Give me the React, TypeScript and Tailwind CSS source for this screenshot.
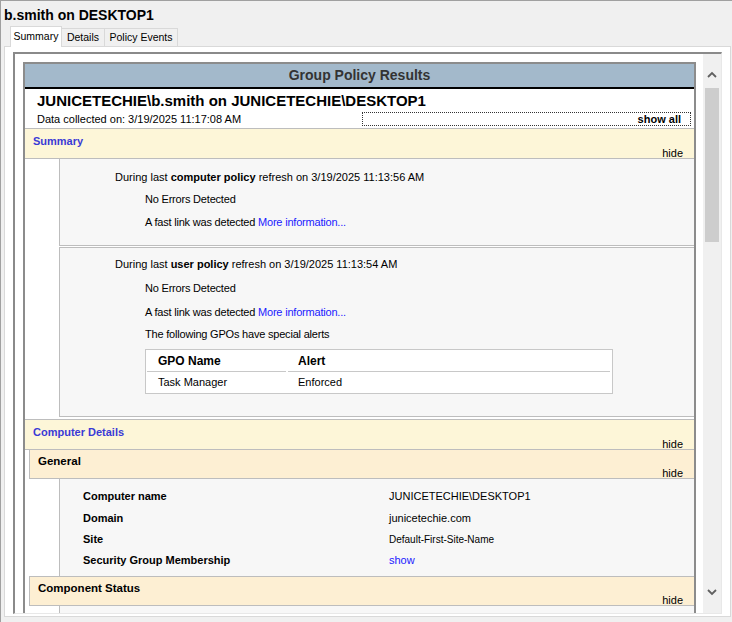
import React from "react";

const font = "font-['Liberation_Sans',Arial,sans-serif]";

function Chevron({ up }: { up?: boolean }) {
  return (
    <svg width="10" height="8" viewBox="0 0 10 8" className="block">
      <polyline
        points={up ? "1,6 5,2 9,6" : "1,2 5,6 9,2"}
        fill="none"
        stroke="#606060"
        strokeWidth="1.8"
      />
    </svg>
  );
}

function SectionBand({ title, className = "" }: { title: string; className?: string }) {
  return (
    <div className={`h-[31px] border-y border-[#bdbdbd] bg-[#fdf6d8] pt-[5px] ${className}`}>
      <div className="pl-[8px] text-[11px] leading-[14px] font-bold text-[#3a3ad6]">{title}</div>
      <div className="pr-[11px] text-right text-[11px] leading-[10px]">hide</div>
    </div>
  );
}

function SubBand({ title, className = "" }: { title: string; className?: string }) {
  return (
    <div className={`ml-[4px] border-l border-[#bdbdbd] bg-[#fdefd3] pt-[4px] ${className}`}>
      <div className="pl-[8px] text-[11.5px] leading-[14px] font-bold">{title}</div>
      <div className="pr-[11px] text-right text-[11px] leading-[11px]">hide</div>
    </div>
  );
}

function Line({ indent, children, className = "" }: { indent: string; children: React.ReactNode; className?: string }) {
  return <div className={`${indent} text-[11px] leading-[16px] whitespace-nowrap ${className}`}>{children}</div>;
}

const details = [
  { label: "Computer name", value: "JUNICETECHIE\\DESKTOP1", h: "h-[22px]", cls: "text-[11px]" },
  { label: "Domain", value: "junicetechie.com", h: "h-[22px]", cls: "text-[11px]" },
  { label: "Site", value: "Default-First-Site-Name", h: "h-[20px]", cls: "text-[10px]" },
  { label: "Security Group Membership", value: "show", h: "h-[22px]", cls: "text-[11px] text-[#1a1aff]" },
];

export default function App() {
  return (
    <div className={`w-[732px] h-[622px] bg-[#f0f0f0] border-l border-t border-[#a0a0a0] overflow-hidden text-black ${font}`}>
      <div className="pt-[6px] pl-[3px] h-[22px] text-[14px] font-bold leading-[16px]">b.smith on DESKTOP1</div>

      <div className="mt-[3px] ml-[9px] h-[20px] flex items-end text-[10.5px]">
        <div className="relative z-10 -mb-[1px] h-[21px] w-[52px] border-t border-x border-[#d9d9d9] bg-white flex items-center justify-center">
          Summary
        </div>
        <div className="h-[18px] w-[43px] border-t border-r border-[#d9d9d9] flex items-center justify-center">Details</div>
        <div className="h-[18px] w-[73px] border-t border-r border-[#d9d9d9] flex items-center justify-center">Policy Events</div>
      </div>

      <div className="ml-[3px] w-[727px] h-[571px] border border-[#d9d9d9] bg-white pl-[8px] pt-[5px]">
        <div className="w-[709px] h-[562px] flex border-t-2 border-l-2 border-r border-b border-[#8a8a8a] border-r-[#e8e8e8] border-b-[#e8e8e8]">
          <div className="w-[688px] h-full overflow-hidden bg-white pl-[8px] pt-[8px]">
            <div className="w-[673px] border-2 border-[#8c8c8c]">
              <div className="h-[23px] bg-[#a3b9cb] text-center text-[14px] leading-[23px] font-bold text-[#333]">
                Group Policy Results
              </div>
              <div className="border-b-2 border-black" />

              <div className="pt-[3px] pb-[2px]">
                <div className="pl-[12px] text-[15px] leading-[18px] font-bold">JUNICETECHIE\b.smith on JUNICETECHIE\DESKTOP1</div>
                <div className="mt-[2px] h-[14px] flex items-center justify-between pr-[3px]">
                  <span className="pl-[12px] text-[11px] leading-[14px]">Data collected on: 3/19/2025 11:17:08 AM</span>
                  <span className="w-[329px] h-[14px] border border-dotted border-[#333] text-right pr-[9px] text-[11px] leading-[12px] font-bold">
                    show all
                  </span>
                </div>
              </div>

              <SectionBand title="Summary" />

              <div className="ml-[34px] h-[87px] border-l border-b border-[#bdbdbd] bg-[#f7f7f7] pt-[10px]">
                <Line indent="pl-[55px]">
                  During last <b>computer policy</b> refresh on 3/19/2025 11:13:56 AM
                </Line>
                <Line indent="pl-[85px]" className="mt-[6px] tracking-[-0.2px]">No Errors Detected</Line>
                <Line indent="pl-[85px]" className="mt-[7px] tracking-[-0.2px]">
                  A fast link was detected <span className="text-[#1a1aff]">More information...</span>
                </Line>
              </div>

              <div className="mt-[1px] ml-[34px] h-[170px] border-l border-y border-[#bdbdbd] bg-[#f7f7f7] pt-[8px]">
                <Line indent="pl-[55px]">
                  During last <b>user policy</b> refresh on 3/19/2025 11:13:54 AM
                </Line>
                <Line indent="pl-[85px]" className="mt-[8px] tracking-[-0.2px]">No Errors Detected</Line>
                <Line indent="pl-[85px]" className="mt-[8px] tracking-[-0.2px]">
                  A fast link was detected <span className="text-[#1a1aff]">More information...</span>
                </Line>
                <Line indent="pl-[85px]" className="mt-[6px] tracking-[-0.2px]">The following GPOs have special alerts</Line>

                <div className="mt-[7px] ml-[85px] w-[468px] border border-[#c8c8c8] bg-white">
                  <div className="h-[22px] flex text-[12px] font-bold">
                    <div className="ml-[1px] w-[139px] border-b border-[#c8c8c8] pl-[11px] flex items-center">GPO Name</div>
                    <div className="ml-[2px] w-[322px] border-b border-[#c8c8c8] pl-[10px] flex items-center">Alert</div>
                  </div>
                  <div className="h-[21px] flex text-[11px]">
                    <div className="ml-[1px] w-[139px] pl-[11px] flex items-center">Task Manager</div>
                    <div className="ml-[2px] w-[322px] pl-[10px] flex items-center">Enforced</div>
                  </div>
                </div>
              </div>

              <SectionBand title="Computer Details" className="mt-[2px]" />
              <SubBand title="General" className="h-[29px] border-b" />

              <div className="ml-[34px] border-l border-[#bdbdbd] bg-[#f7f7f7] pt-[6px] pb-[5px]">
                {details.map((d) => (
                  <div key={d.label} className={`${d.h} flex items-center`}>
                    <div className="pl-[23px] w-[329px] shrink-0 text-[11px] font-bold whitespace-nowrap">{d.label}</div>
                    <div className={`whitespace-nowrap ${d.cls}`}>{d.value}</div>
                  </div>
                ))}
              </div>

              <SubBand title="Component Status" className="h-[30px] border-y" />
              <div className="ml-[34px] h-[40px] border-l border-[#bdbdbd] bg-[#f7f7f7]" />
            </div>
          </div>

          <div className="w-[18px] h-full bg-[#f0f0f0] flex flex-col items-center pt-[17px] pb-[17px]">
            <Chevron up />
            <div className="mt-[9px] w-[14px] h-[154px] bg-[#cdcdcd]" />
            <div className="flex-1" />
            <Chevron />
          </div>
        </div>
      </div>
    </div>
  );
}
